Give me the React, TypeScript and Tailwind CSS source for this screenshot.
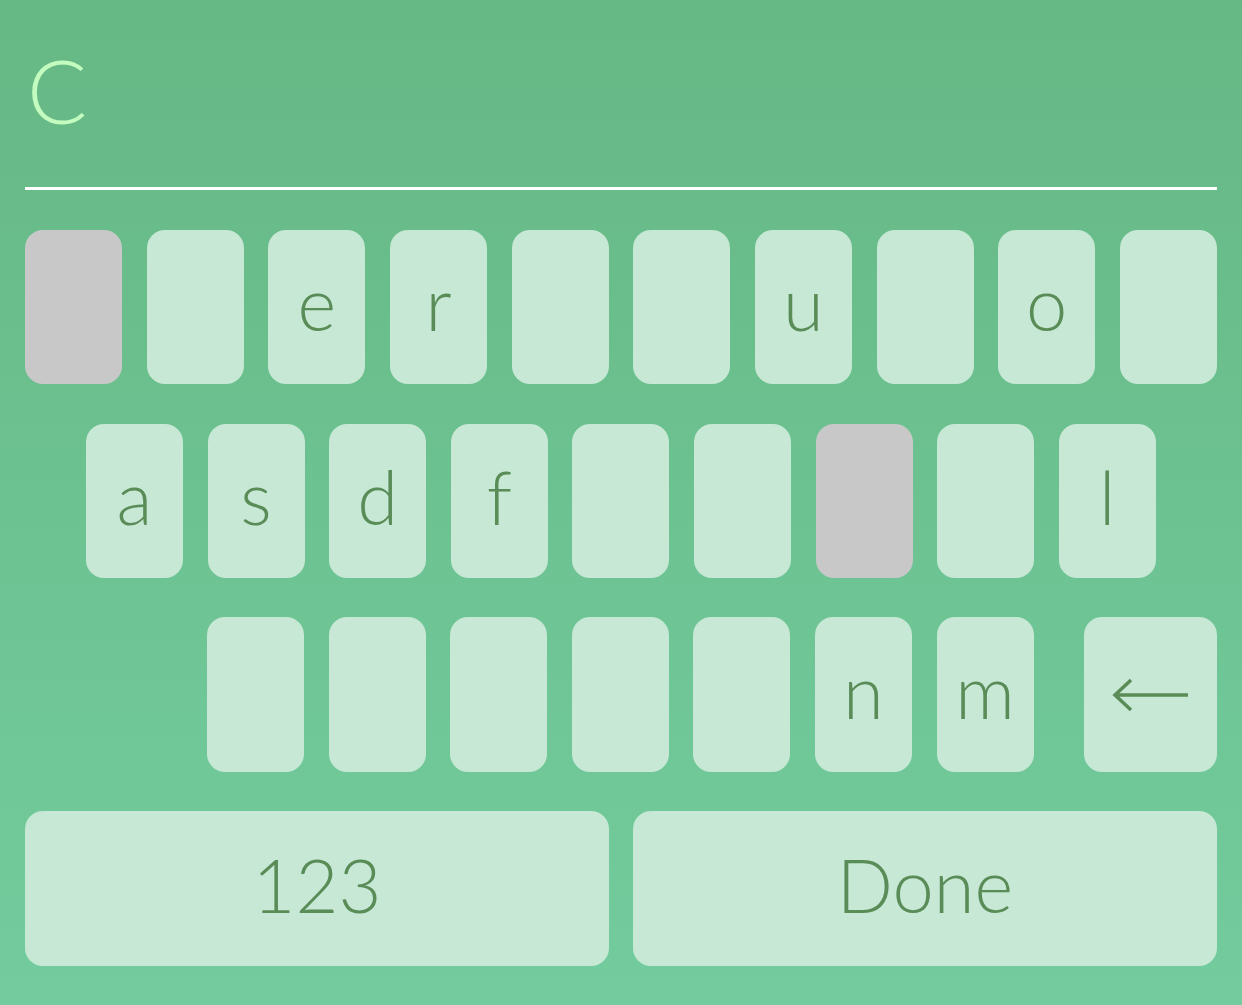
import React from "react";

const font = { fontFamily: "Lato, 'Noto Sans', sans-serif" };

const Key = ({ label, gray, tall }: { label?: string; gray?: boolean; tall?: boolean }) => (
  <div
    className={`w-[97px] ${tall ? "h-[155px]" : "h-[154px]"} rounded-[18px] flex justify-center items-center pb-[8px] text-[74px] leading-none font-light text-[#5a8c57] ${
      gray ? "bg-[#c8c8c8]" : "bg-[#c6e8d5]"
    }`}
  >
    {label}
  </div>
);

const App = () => {
  const row1 = ["", "", "e", "r", "", "", "u", "", "o", ""];
  const row2 = ["a", "s", "d", "f", "", "", "", "", "l"];
  const row3 = ["", "", "", "", "", "n", "m"];

  return (
    <div
      className="w-[1242px] h-[1005px] bg-gradient-to-b from-[#66b884] to-[#73cc9e] px-[25px] flex flex-col"
      style={font}
    >
      <div className="h-[187px] pt-[45px] pl-[2px]">
        <span className="text-[89px] leading-none font-light text-[#c4fcbf]">C</span>
      </div>
      <div className="h-[3px] bg-white" />

      <div className="mt-[40px] flex flex-col">
        <div className="flex justify-between">
          {row1.map((k, i) => (
            <Key key={i} label={k} gray={i === 0} />
          ))}
        </div>
        <div className="flex gap-[24.6px] ml-[61px] mt-[40px]">
          {row2.map((k, i) => (
            <Key key={i} label={k} gray={i === 6} />
          ))}
        </div>
        <div className="flex gap-[24.6px] ml-[182px] mt-[39px]">
          {row3.map((k, i) => (
            <Key key={i} label={k} tall />
          ))}
          <div className="ml-auto w-[133px] h-[155px] rounded-[18px] bg-[#c6e8d5] flex justify-center items-center">
            <svg width="80" height="40" viewBox="0 0 80 40" fill="none">
              <path
                d="M77 20H4M20 5L4 20L20 35"
                stroke="#5a8c57"
                strokeWidth="3.5"
              />
            </svg>
          </div>
        </div>
        <div className="flex gap-[24px] mt-[39px]">
          <div className="flex-1 h-[155px] rounded-[18px] bg-[#c6e8d5] flex justify-center items-center pb-[8px] text-[74px] leading-none font-light text-[#5a8c57]">
            123
          </div>
          <div className="flex-1 h-[155px] rounded-[18px] bg-[#c6e8d5] flex justify-center items-center pb-[8px] text-[74px] leading-none font-light text-[#5a8c57]">
            Done
          </div>
        </div>
      </div>
    </div>
  );
};

export default App;
